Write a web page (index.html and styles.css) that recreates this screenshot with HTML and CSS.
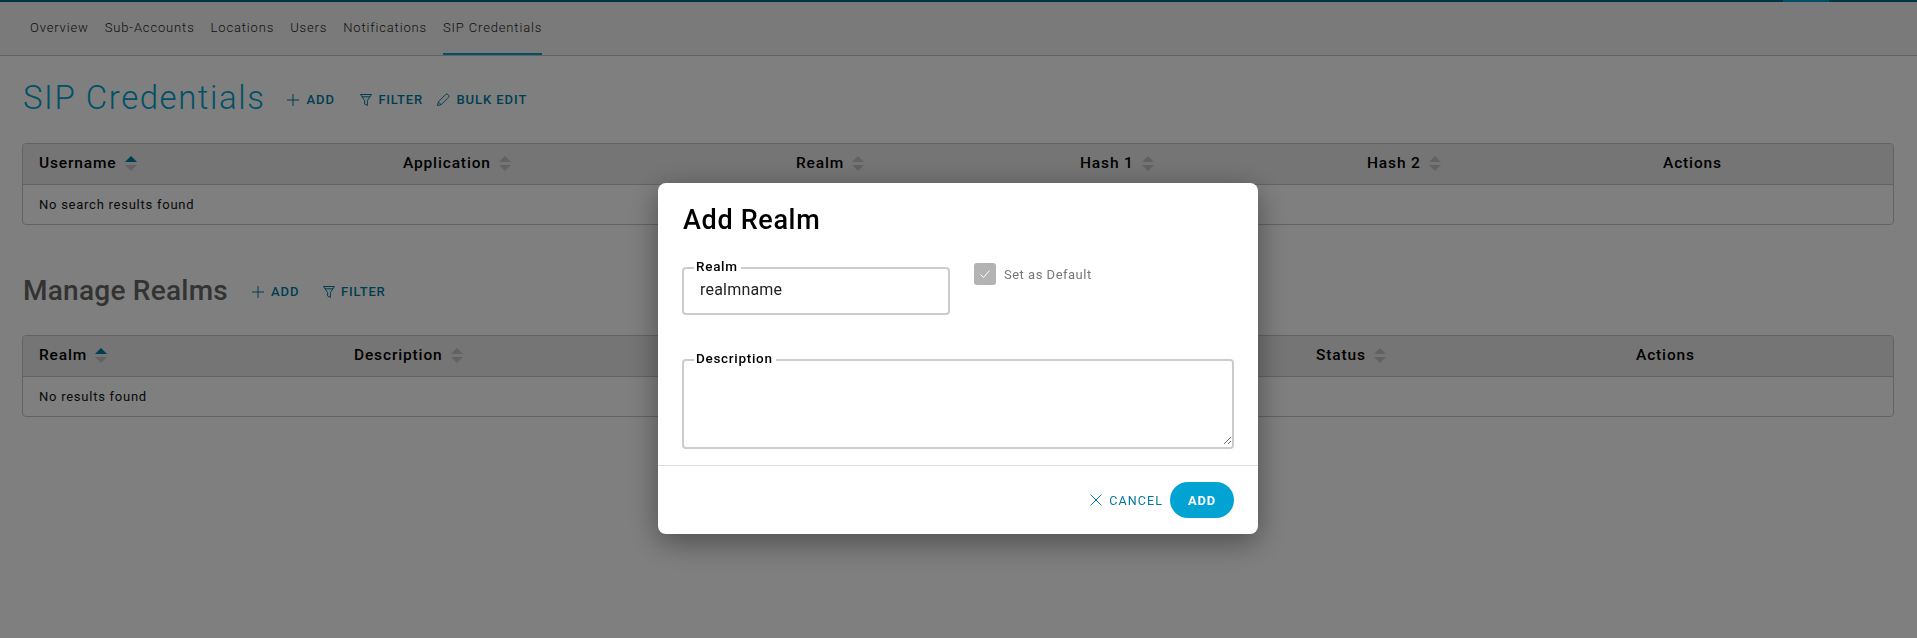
FILE: index.html
```html
<!DOCTYPE html>
<html lang="en">
<head>
<meta charset="utf-8">
<title>SIP Credentials</title>
<link rel="stylesheet" href="styles.css">
</head>
<body>
<div class="page">
  <div class="top-mark"></div>
  <nav class="tabs">
    <a class="tab">Overview</a>
    <a class="tab">Sub-Accounts</a>
    <a class="tab">Locations</a>
    <a class="tab">Users</a>
    <a class="tab">Notifications</a>
    <a class="tab tab-active">SIP Credentials</a>
  </nav>
  <main class="content">
    <section class="section section-sip">
      <header class="section-head">
        <h1 class="title-main">SIP Credentials</h1>
        <div class="actions actions-sip">
          <a class="action action-add"><svg class="ico" viewBox="0 0 14 14"><path d="M7 1v12M1 7h12"/></svg>ADD</a>
          <a class="action action-filter"><svg class="ico" viewBox="0 0 14 14"><path d="M1.5 1.5h11L8.4 7.5v5L5.6 11V7.5zM3 3.8h8"/></svg>FILTER</a>
          <a class="action action-edit"><svg class="ico" viewBox="0 0 14 14"><path d="M1.5 12.5l.8-3.6L9.8 1.4a1.4 1.4 0 0 1 2 0l.8.8a1.4 1.4 0 0 1 0 2l-7.5 7.5zM2.3 8.9l2.8 2.8"/></svg>BULK EDIT</a>
        </div>
      </header>
      <div class="table">
        <div class="row row-head cols-sip">
          <div class="cell">Username <span class="sort sort-asc"><i></i><i></i></span></div>
          <div class="cell">Application <span class="sort"><i></i><i></i></span></div>
          <div class="cell">Realm <span class="sort"><i></i><i></i></span></div>
          <div class="cell">Hash 1 <span class="sort"><i></i><i></i></span></div>
          <div class="cell">Hash 2 <span class="sort"><i></i><i></i></span></div>
          <div class="cell">Actions</div>
        </div>
        <div class="row row-body">No search results found</div>
      </div>
    </section>
    <section class="section section-realms">
      <header class="section-head">
        <h2 class="title-sub">Manage Realms</h2>
        <div class="actions actions-realms">
          <a class="action action-add"><svg class="ico" viewBox="0 0 14 14"><path d="M7 1v12M1 7h12"/></svg>ADD</a>
          <a class="action action-filter"><svg class="ico" viewBox="0 0 14 14"><path d="M1.5 1.5h11L8.4 7.5v5L5.6 11V7.5zM3 3.8h8"/></svg>FILTER</a>
        </div>
      </header>
      <div class="table">
        <div class="row row-head cols-realms">
          <div class="cell">Realm <span class="sort sort-asc"><i></i><i></i></span></div>
          <div class="cell">Description <span class="sort"><i></i><i></i></span></div>
          <div class="cell">Status <span class="sort"><i></i><i></i></span></div>
          <div class="cell">Actions</div>
        </div>
        <div class="row row-body">No results found</div>
      </div>
    </section>
  </main>
</div>
<div class="overlay">
  <div class="modal">
    <h3 class="modal-title">Add Realm</h3>
    <div class="modal-body">
      <div class="form-row">
        <fieldset class="field field-realm">
          <legend>Realm</legend>
          <input class="input" type="text" value="realmname">
        </fieldset>
        <label class="check">
          <span class="box"><svg viewBox="0 0 14 14"><path d="M2.5 7.5l3 3 6-7"/></svg></span>
          Set as Default
        </label>
      </div>
      <fieldset class="field field-desc">
        <legend>Description</legend>
        <textarea class="textarea"></textarea>
      </fieldset>
    </div>
    <footer class="modal-foot">
      <a class="cancel"><svg class="ico" viewBox="0 0 14 14"><path d="M1.5 1.5l11 11M12.5 1.5l-11 11"/></svg>CANCEL</a>
      <button class="btn" type="button">ADD</button>
    </footer>
  </div>
</div>
</body>
</html>
```
FILE: styles.css
```css
* { box-sizing: border-box; }
html, body { margin: 0; height: 100%; }
body {
  background: #fff;
  color: #111;
  font-family: Roboto, "Liberation Sans", sans-serif;
  overflow: hidden;
}
.page { height: 638px; position: relative; }
.top-mark {
  position: absolute;
  top: 0;
  left: 1783px;
  width: 46px;
  height: 2px;
  background: #00a3d1;
}
.tabs {
  display: flex;
  height: 56px;
  padding-left: 30px;
  gap: 16px;
  background: #f5f5f5;
  border-top: 2px solid #006c88;
  border-bottom: 1px solid #c4c4c4;
}
.tab {
  height: 53px;
  line-height: 52px;
  font-size: 13px;
  font-weight: 300;
  letter-spacing: .85px;
  color: #222;
  border-bottom: 2px solid transparent;
}
.tab-active { border-bottom-color: #00a3d1; }
.content { padding: 0 23px 0 22px; }
.section-head { display: flex; align-items: center; }
.section-sip .section-head { height: 87px; padding-bottom: 4px; }
.section-realms { margin-top: 43px; }
.section-realms .section-head { height: 67px; padding-bottom: 22px; }
.title-main {
  margin: 0 0 0 1px;
  font-size: 33px;
  font-weight: 300;
  letter-spacing: 1.53px;
  color: #00a3d1;
}
.title-sub {
  margin: 0 0 0 1px;
  font-size: 28px;
  font-weight: 500;
  letter-spacing: .25px;
  color: #666;
}
.actions { display: flex; align-items: center; }
.actions-sip { margin-left: 21px; padding-top: 4px; }
.actions-realms { margin-left: 23px; padding-top: 2px; }
.action {
  display: flex;
  align-items: center;
  gap: 6px;
  font-size: 13px;
  font-weight: 500;
  letter-spacing: .95px;
  color: #007ba5;
}
.action-add { width: 73px; }
.actions-realms .action-add { width: 71px; }
.action-filter { width: 77px; gap: 5px; letter-spacing: .8px; }
.ico {
  width: 14px;
  height: 14px;
  fill: none;
  stroke: currentColor;
  stroke-width: 1;
  flex: none;
}
.table {
  border: 1px solid #c6c6c6;
  border-radius: 4px;
  font-size: 13px;
}
.row { height: 41px; display: grid; align-items: center; padding: 0 0 2px 16px; }
.row-head {
  background: #ebebeb;
  border-bottom: 1px solid #c6c6c6;
  border-radius: 4px 4px 0 0;
  font-size: 15.5px;
  font-weight: 500;
  letter-spacing: .85px;
  color: #000;
}
.row-body { height: 39px; padding-bottom: 0; letter-spacing: .75px; color: #111; }
.cols-sip { grid-template-columns: 364px 393px 284px 287px 296px 1fr; }
.cols-realms { grid-template-columns: 315px 962px 320px 1fr; }
.cell { display: flex; align-items: center; gap: 8px; }
.sort { display: flex; flex-direction: column; gap: 3px; }
.sort i {
  display: block;
  width: 0;
  height: 0;
  border-left: 6px solid transparent;
  border-right: 6px solid transparent;
}
.sort i:first-child { border-bottom: 6px solid #c4c4c4; }
.sort i:last-child { border-top: 6px solid #c4c4c4; }
.sort-asc i:first-child { border-bottom-color: #007ba5; }
.overlay {
  position: fixed;
  inset: 0;
  background: rgba(0, 0, 0, .5);
}
.modal {
  position: absolute;
  left: 658px;
  top: 183px;
  width: 600px;
  height: 351px;
  background: #fff;
  border-radius: 8px;
  box-shadow: 0 8px 30px rgba(0, 0, 0, .4);
  display: flex;
  flex-direction: column;
}
.modal-title {
  margin: 0;
  padding: 21px 25px 0;
  height: 76px;
  font-size: 27px;
  font-weight: 500;
  letter-spacing: .65px;
  color: #000;
}
.modal-body { padding: 0 24px; height: 206px; }
.form-row { display: flex; }
.field {
  margin: 0;
  min-width: 0;
  padding: 0;
  border: 2px solid #ccc;
  border-radius: 4px;
}
.field legend {
  margin-left: 10px;
  padding: 0 3px 4px 2px;
  font-size: 13.5px;
  font-weight: 500;
  letter-spacing: .7px;
  line-height: 14px;
  color: #000;
}
.field-realm { width: 268px; height: 56px; }
.input {
  display: block;
  width: 100%;
  border: 0;
  outline: 0;
  padding: 0 16px;
  height: 24px;
  font: 16px Roboto, sans-serif;
  letter-spacing: .2px;
  color: #222;
  background: none;
}
.check {
  display: flex;
  align-items: center;
  gap: 8px;
  height: 22px;
  margin: 4px 0 0 24px;
  font-size: 13px;
  letter-spacing: .5px;
  color: #777;
}
.box {
  width: 22px;
  height: 22px;
  border-radius: 3px;
  background: #b3b3b3;
  display: flex;
  align-items: center;
  justify-content: center;
}
.box svg { width: 14px; height: 14px; fill: none; stroke: #fff; stroke-width: 1; }
.field-desc { width: 552px; height: 98px; margin-top: 36px; }
.textarea {
  display: block;
  width: 100%;
  height: 76px;
  border: 0;
  outline: 0;
  padding: 0;
  resize: vertical;
  background: none;
}
.modal-foot {
  flex: 1;
  display: flex;
  align-items: center;
  justify-content: flex-end;
  padding: 0 24px 0 0;
  gap: 7px;
  border-top: 1px solid #ddd;
}
.cancel {
  display: flex;
  align-items: center;
  gap: 6px;
  font-size: 12.5px;
  font-weight: 400;
  letter-spacing: 1.1px;
  color: #00789f;
}
.btn {
  width: 64px;
  height: 36px;
  border: 0;
  border-radius: 18px;
  background: #00a3d1;
  color: #fff;
  font: 700 13px Roboto, sans-serif;
  letter-spacing: .8px;
}
```
